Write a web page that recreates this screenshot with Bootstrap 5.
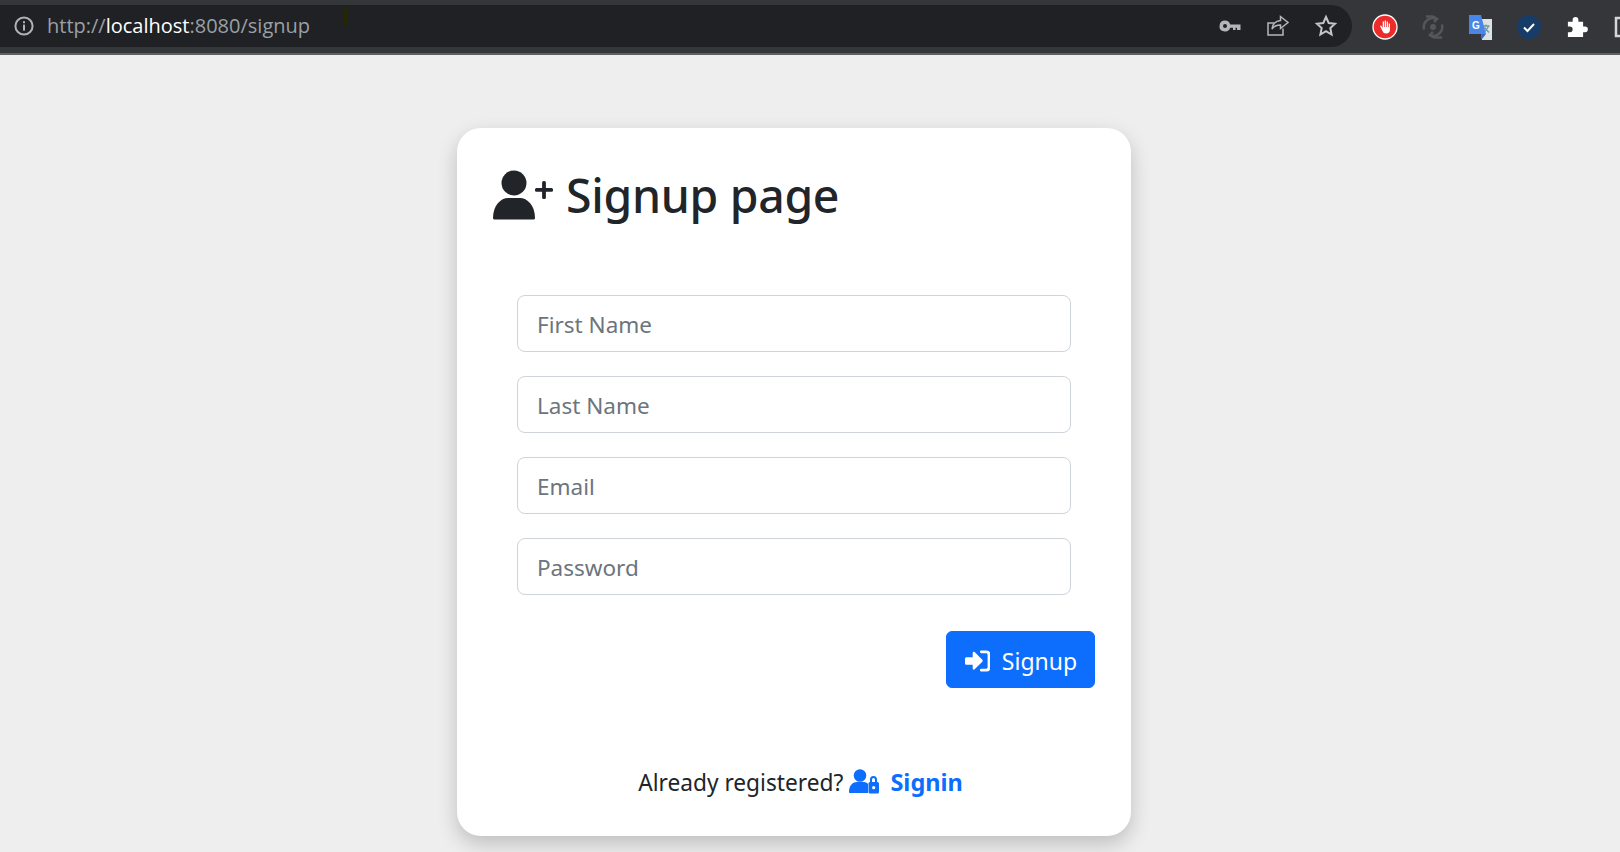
<!DOCTYPE html>
<html lang="en">
<head>
<meta charset="utf-8">
<title>Signup</title>
<link href="https://cdn.jsdelivr.net/npm/bootstrap@5.3.0/dist/css/bootstrap.min.css" rel="stylesheet">
<style>
html,body{height:852px;overflow:hidden}
body{background:#eee;font-family:"Noto Sans","Open Sans",sans-serif;color:#212529}
.chrome-bar{height:55px;background:#35363a;border-bottom:2px solid #5f6064;padding:5px 0}
.omni{width:1352px;height:42px;background:#202124;border-radius:0 21px 21px 0;padding:0 14px 0 13px;position:relative}
.url-text{font-family:"Open Sans","Noto Sans",sans-serif;font-size:20px;color:#9aa0a6;line-height:42px;margin-left:12px}
.url-text b{font-weight:400;color:#fff}
.speck{position:absolute;left:343px;top:3px;width:4px;height:17px;background:#262600}
.ext-row{margin-left:9px}
.ext-slot{width:48px;height:42px}
.signup-card{width:674px;height:708px;margin:73px 0 0 457px;background:#fff;border-radius:24px;box-shadow:0 8px 20px rgba(0,0,0,.2);padding:38px 36px 36px}
.page-title{font-size:46.4px;font-weight:500;line-height:58px;margin:0;letter-spacing:-.3px}
.page-title svg{margin-right:13px;margin-top:-1px}
.signup-form{padding:71px 24px 0}
.field{height:57px;font-size:22.5px;margin-bottom:24px;padding:10px 19px 8px;border-radius:8px;width:554px;color:#212529;border-color:#ced4da}
.field::placeholder{color:#6c757d}
.btn-wrap{margin-right:-24px}
.action-btn{height:57px;width:149px;font-size:23px;border-radius:6px;margin-top:12px;padding-top:9px;background:#0d6efd}
.action-btn svg{margin-left:1px}
.foot-line{margin-top:77px;padding-left:13px;font-size:22.7px;line-height:34px}
.foot-line a{color:#0d6efd;font-weight:700;text-decoration:none;font-size:23.5px}
.lock-ico{vertical-align:-3px;margin:0 11px 0 0}
</style>
</head>
<body>
<div class="chrome-bar d-flex">
  <div class="omni d-flex align-items-center flex-shrink-0">
    <svg width="22" height="22" viewBox="0 0 22 22"><circle cx="11" cy="11" r="8.6" fill="none" stroke="#b0b3b8" stroke-width="2"/><rect x="10" y="9.6" width="2" height="6" fill="#b0b3b8"/><rect x="10" y="6.2" width="2" height="2" fill="#b0b3b8"/></svg>
    <span class="url-text">http://<b>localhost</b>:8080/signup</span>
    <span class="speck"></span>
    <span class="ms-auto d-flex align-items-center gap-4">
      <svg width="24" height="24" viewBox="0 0 24 24"><path d="M7 6.500a5.500 5.500 0 1 0 5.200 7.300H15V16h2.500v-2.200H19V16h3.500v-5.500H12.200A5.500 5.500 0 0 0 7 6.500zm0 3.500a2 2 0 1 1 0 4 2 2 0 0 1 0-4z" fill="#b5b6b8"/></svg>
      <svg width="24" height="24" viewBox="0 0 24 24" fill="none" stroke="#b5b6b8" stroke-width="1.500"><path d="M17 14.500V21H2V9h6"/><path d="M14.500 2.500L22 8.500l-7.500 6v-3.500c-4 0-6.500 1-8.500 4 .5-5 3.500-8 8.500-8.500z"/></svg>
      <svg width="24" height="24" viewBox="0 0 24 24" fill="none" stroke="#c4c5c7" stroke-width="2"><path d="M12 3l2.700 6 6.300.7-4.700 4.300 1.300 6.500-5.600-3.300-5.600 3.300 1.300-6.500L3 9.700 9.300 9z"/></svg>
    </span>
  </div>
  <div class="ext-row d-flex align-items-center">
    <span class="ext-slot d-flex align-items-center justify-content-center"><svg width="26" height="26" viewBox="0 0 26 26"><circle cx="13" cy="13" r="12" fill="#ee2b2b" stroke="#fff" stroke-width="1.300"/><path d="M8 12l2.500 5c.8 1.800 2 2.500 3.500 2.500 2.500 0 4-1.500 4-4V9.500h-1.300V13h-.7V7.500h-1.300V13H14V6.500h-1.300V13H12V7.500h-1.300V14L9 11.500z" fill="#fff"/></svg></span>
    <span class="ext-slot d-flex align-items-center justify-content-center"><svg width="24" height="24" viewBox="0 0 24 24" fill="none" stroke="#55565a" stroke-width="2.500"><path d="M3 14.500A9.300 9.300 0 0 1 15 3.500"/><path d="M21 9.500A9.300 9.300 0 0 1 9 20.500"/><path d="M5 1.500h7l4 2.500-3 3"/><path d="M21 22.500h-8l-4-2.500 3-3"/><circle cx="12" cy="12" r="3" fill="#55565a" stroke="none"/></svg></span>
    <span class="ext-slot d-flex align-items-center justify-content-center"><svg width="26" height="26" viewBox="0 0 26 26"><path d="M11 5h13v21H14z" fill="#dfe2e2"/><path d="M14.500 12h7M18 10.500v2M16 19l4.500-6.500M16.500 13.500l4.500 5" stroke="#6f9a9c" stroke-width="1.300" fill="none"/><path d="M1 1h12l5 19H1z" fill="#4a86e8"/><path d="M13 20h5l-4 5z" fill="#3367c9"/><text x="4" y="15" font-size="10" font-weight="700" font-family="Liberation Sans" fill="#fff">G</text></svg></span>
    <span class="ext-slot d-flex align-items-center justify-content-center"><svg width="24" height="24" viewBox="0 0 24 24"><circle cx="12" cy="12" r="12" fill="#173c68"/><path d="M7 12.500l3.500 3.500L17 9" stroke="#fff" stroke-width="2" fill="none"/></svg></span>
    <span class="ext-slot d-flex align-items-center justify-content-center"><svg width="22" height="22" viewBox="0 0 22 22"><path d="M2 6h5V4a3 3 0 0 1 6 0v2h5v5h2a3 3 0 0 1 0 6h-2v5H2v-5h2a3 3 0 0 0 0-6H2z" fill="#fff" transform="scale(.95)"/></svg></span>
    <span class="ext-slot d-flex align-items-center justify-content-center"><svg width="22" height="24" viewBox="0 0 22 24"><rect x="2" y="3" width="20" height="18" fill="none" stroke="#d5d6d8" stroke-width="2.500"/></svg></span>
  </div>
</div>
<div class="signup-card">
  <h1 class="page-title d-flex align-items-center">
    <svg width="60" height="50" viewBox="0 0 60 50" fill="#212529"><circle cx="21" cy="13" r="12.500"/><path d="M0 48c0-13 8-20 15-20h12c7 0 15 7 15 20 0 1-1 1.500-2 1.500H2c-1 0-2-.5-2-1.500z"/><rect x="42" y="18" width="18" height="3.800" rx="1.500"/><rect x="49.100" y="11" width="3.800" height="18" rx="1.500"/></svg>
    Signup page
  </h1>
  <form class="signup-form">
    <input class="form-control field" type="text" placeholder="First Name">
    <input class="form-control field" type="text" placeholder="Last Name">
    <input class="form-control field" type="email" placeholder="Email">
    <input class="form-control field" type="password" placeholder="Password">
    <div class="d-flex justify-content-end btn-wrap">
      <button type="button" class="btn btn-primary action-btn d-inline-flex align-items-center justify-content-center">
        <svg width="25" height="22" viewBox="0 0 26 22" fill="#fff"><path d="M0 8.500c0-.8.700-1.500 1.500-1.500H8V2.500c0-1 1.200-1.500 2-.8l8 8c.6.6.6 1.400 0 2l-8 8c-.8.700-2 .2-2-.8V15H1.500C.7 15 0 14.300 0 13.500z"/><path d="M17 1.500h5c2 0 3 1 3 3v13c0 2-1 3-3 3h-5" fill="none" stroke="#fff" stroke-width="3" stroke-linecap="round"/></svg>
        <span class="ms-2 ps-1">Signup</span>
      </button>
    </div>
  </form>
  <p class="foot-line text-center mb-0">Already registered?<a href="#"> <svg class="lock-ico" width="30" height="25" viewBox="0 0 30 25" fill="#0d6efd"><circle cx="11" cy="6.500" r="6.300"/><path d="M0 23c0-7 4-10 8-10h6c2 0 4 .6 5 2v9H1c-.6 0-1-.4-1-1z"/><path d="M21 13v-2.500a3.500 3.500 0 0 1 7 0V13h-2v-2.500a1.500 1.500 0 0 0-3 0V13z"/><rect x="19.500" y="13" width="10.500" height="11.500" rx="1.500"/><circle cx="24.700" cy="18.700" r="1.600" fill="#fff"/></svg>Signin</a></p>
</div>
<script src="https://cdn.jsdelivr.net/npm/bootstrap@5.3.0/dist/js/bootstrap.bundle.min.js"></script>
</body>
</html>
